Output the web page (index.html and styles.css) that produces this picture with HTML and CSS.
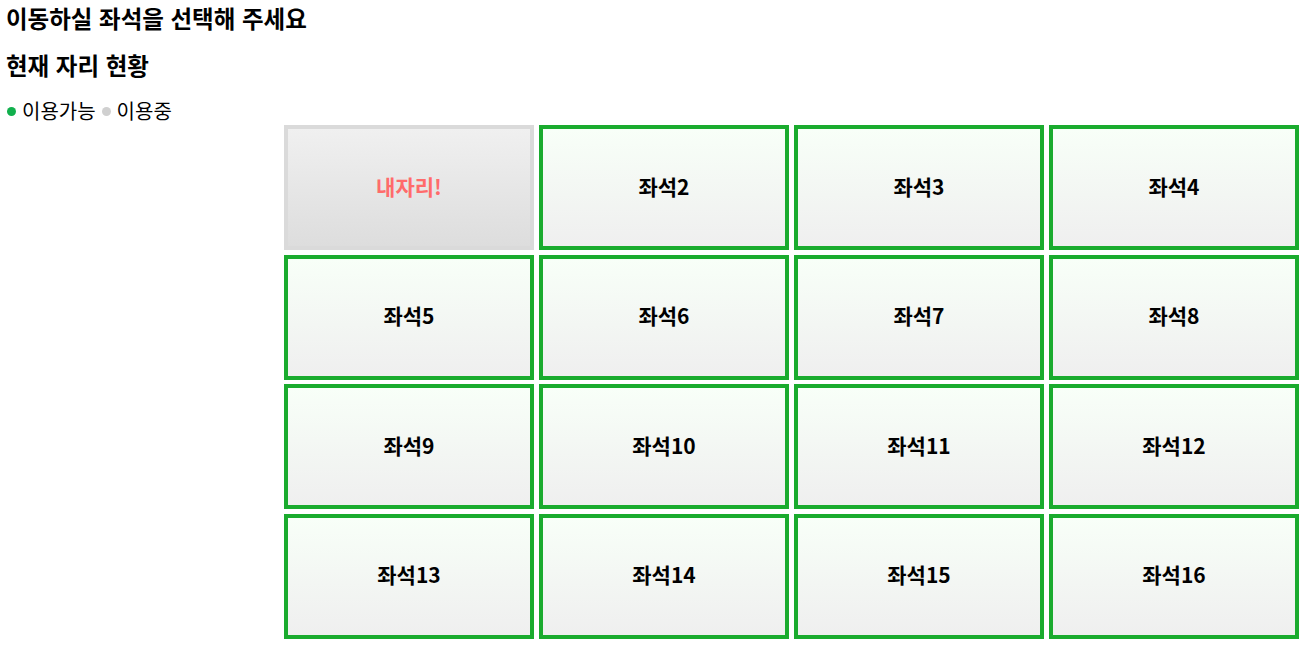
FILE: index.html
```html
<!DOCTYPE html>
<html lang="ko">
<head>
<meta charset="utf-8">
<title>좌석 이동</title>
<link rel="stylesheet" href="styles.css">
</head>
<body>
<h1 class="title">이동하실 좌석을 선택해 주세요</h1>
<h2 class="subtitle">현재 자리 현황</h2>
<div class="legend">
  <span class="dot dot-free"></span><span class="legend-label">이용가능</span>
  <span class="dot dot-busy"></span><span class="legend-label">이용중</span>
</div>
<div class="seats">
  <button class="seat seat-mine">내자리!</button>
  <button class="seat">좌석2</button>
  <button class="seat">좌석3</button>
  <button class="seat">좌석4</button>
  <button class="seat">좌석5</button>
  <button class="seat">좌석6</button>
  <button class="seat">좌석7</button>
  <button class="seat">좌석8</button>
  <button class="seat">좌석9</button>
  <button class="seat">좌석10</button>
  <button class="seat">좌석11</button>
  <button class="seat">좌석12</button>
  <button class="seat">좌석13</button>
  <button class="seat">좌석14</button>
  <button class="seat">좌석15</button>
  <button class="seat">좌석16</button>
</div>
</body>
</html>
```
FILE: styles.css
```css
html, body {
  margin: 0;
  padding: 0;
  background: #ffffff;
}
body {
  padding-left: 6px;
  font-family: "Noto Sans CJK KR", "Noto Sans", sans-serif;
  color: #000;
}
.title {
  font-size: 23.5px;
  line-height: 26px;
  font-weight: 700;
  margin: 5px 0 0;
}
.subtitle {
  font-size: 23.5px;
  line-height: 26px;
  font-weight: 700;
  margin: 21px 0 0;
}
.legend {
  margin-top: 21px;
  font-size: 20px;
  line-height: 24px;
  height: 24px;
  display: flex;
  align-items: center;
}
.dot {
  width: 9px;
  height: 9px;
  border-radius: 50%;
  display: inline-block;
  margin-right: 6px;
}
.dot-free { background: #11b04d; margin-left: 1px; }
.dot-busy { background: #d0d0d0; margin-left: 6px; }
.seats {
  margin: 2px 0 0 278px;
  width: 1015px;
  display: grid;
  grid-template-columns: repeat(4, 250px);
  grid-template-rows: repeat(4, 125px);
  column-gap: 5px;
  row-gap: 4.67px;
}
.seat {
  box-sizing: border-box;
  width: 100%;
  height: 100%;
  border: 4px solid #1aab2e;
  background: linear-gradient(to bottom, #f8fff8, #efefef);
  font-family: "Noto Sans CJK KR", "Noto Sans", sans-serif;
  font-size: 21px;
  font-weight: 700;
  color: #000;
  padding: 0 0 4px;
  margin: 0;
  cursor: pointer;
}
.seat-mine {
  border-color: #dadada;
  background: linear-gradient(to bottom, #f0f0f0, #dddddd);
  color: #ff6b6b;
}
```
